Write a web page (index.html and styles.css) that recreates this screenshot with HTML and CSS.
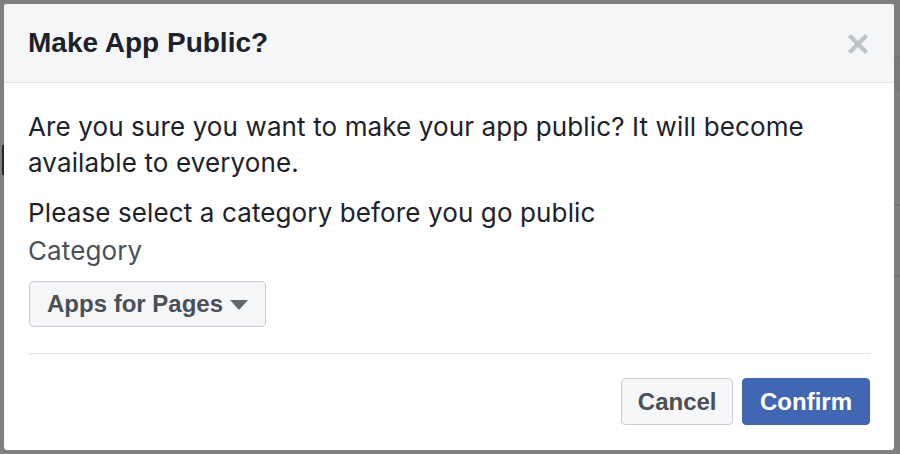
FILE: index.html
```html
<!DOCTYPE html>
<html>
<head>
<meta charset="utf-8">
<link rel="stylesheet" href="styles.css">
</head>
<body>
<div class="page">
  <div class="dialog">
    <div class="header">
      <h1 class="title">Make App Public?</h1>
      <span class="close" aria-label="Close">
        <svg width="22" height="22" viewBox="0 0 22 22"><path d="M2.5 2.5 L19.5 19.5 M19.5 2.5 L2.5 19.5" stroke="#bec2c9" stroke-width="4.2" stroke-linecap="butt"/></svg>
      </span>
    </div>
    <div class="body">
      <p class="text">Are you sure you want to make your app public? It will become available to everyone.</p>
      <p class="text">Please select a category before you go public</p>
      <div class="label">Category</div>
      <div class="select">
        <span>Apps for Pages</span>
        <svg class="caret" width="18" height="10" viewBox="0 0 18 10"><path d="M0 0 H18 L9 10 Z" fill="#606770"/></svg>
      </div>
      <div class="divider"></div>
      <div class="footer">
        <button class="btn btn-cancel">Cancel</button>
        <button class="btn btn-confirm">Confirm</button>
      </div>
    </div>
  </div>
</div>
</body>
</html>
```
FILE: styles.css
```css
html, body {
  margin: 0;
  padding: 0;
}
body {
  width: 900px;
  height: 454px;
  overflow: hidden;
  background-color: #7f7f7f;
  background-image:
    linear-gradient(#747474, #747474),
    linear-gradient(#747474, #747474),
    linear-gradient(#747474, #747474),
    linear-gradient(#7a7a7a, #7a7a7a),
    linear-gradient(#262626, #262626);
  background-size: 6px 2px, 6px 2px, 6px 2px, 6px 36px, 2px 30px;
  background-position: 894px 56px, 894px 204px, 894px 275px, 894px 56px, 2px 145px;
  background-repeat: no-repeat;
  font-family: "Liberation Sans", Arial, Helvetica, sans-serif;
}
.page {
  padding: 4px 6px 4px 4px;
}
.dialog {
  width: 890px;
  height: 446px;
  background: #ffffff;
  border-radius: 3px;
  overflow: hidden;
  display: flex;
  flex-direction: column;
}
.header {
  height: 78px;
  background: #f5f6f7;
  border-bottom: 1px solid #e5e5e5;
  display: flex;
  align-items: center;
  justify-content: space-between;
  padding: 0 25px 0 24px;
  flex-shrink: 0;
}
.title {
  margin: 0;
  font-size: 28px;
  font-weight: bold;
  color: #1d2129;
  line-height: 36px;
}
.close {
  display: flex;
  width: 22px;
  height: 22px;
  margin-top: 2px;
}
.body {
  padding: 26px 24px 0 24px;
}
.text {
  margin: 0 0 14px 0;
  font-family: Inter, "Liberation Sans", sans-serif;
  font-size: 26px;
  letter-spacing: 0.12px;
  line-height: 36px;
  color: #1d2129;
}
.label {
  font-family: Inter, "Liberation Sans", sans-serif;
  font-size: 26px;
  letter-spacing: 0.1px;
  line-height: 36px;
  color: #4b4f56;
  margin-top: -12px;
}
.select {
  margin-top: 12px;
  margin-left: 1px;
  display: inline-flex;
  align-items: center;
  gap: 7px;
  height: 46px;
  box-sizing: border-box;
  padding: 0 17px 0 17px;
  background: #f5f6f7;
  border: 1px solid #ccd0d5;
  border-radius: 4px;
  font-size: 24px;
  font-weight: bold;
  color: #4b4f56;
}
.caret {
  display: block;
  margin-top: 2px;
}
.divider {
  margin-top: 26px;
  height: 1px;
  background: #dddfe2;
}
.footer {
  margin-top: 24px;
  display: flex;
  justify-content: flex-end;
  gap: 9px;
}
.btn {
  height: 47px;
  box-sizing: border-box;
  padding: 0 16px;
  border: 1px solid #ccd0d5;
  border-radius: 4px;
  font-family: "Liberation Sans", Arial, Helvetica, sans-serif;
  font-size: 24px;
  font-weight: bold;
  cursor: pointer;
}
.btn-cancel {
  background: #f5f6f7;
  color: #4b4f56;
  padding: 0 15.5px;
}
.btn-confirm {
  background: #4267b2;
  border-color: #4267b2;
  color: #ffffff;
  padding: 0 17px;
}
```
